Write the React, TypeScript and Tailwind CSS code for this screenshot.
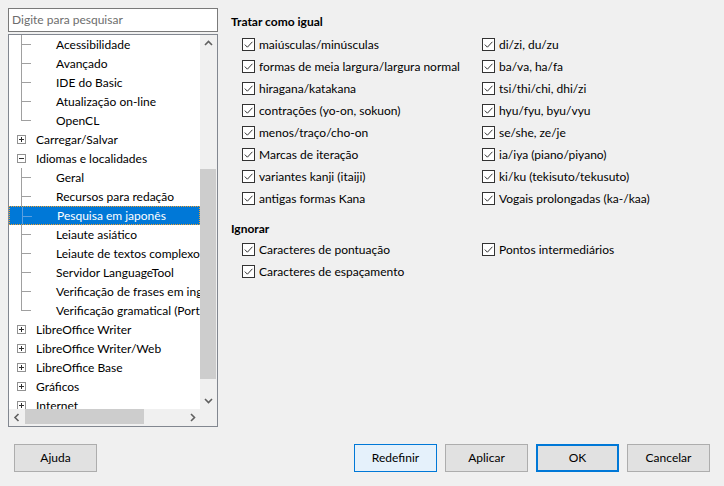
import React from "react";

type Row = {
  label: string;
  level: 1 | 2;
  expander?: "plus" | "minus";
  last?: boolean;
  selected?: boolean;
};

const treeRows: Row[] = [
  { label: "Acessibilidade", level: 2 },
  { label: "Avançado", level: 2 },
  { label: "IDE do Basic", level: 2 },
  { label: "Atualização on-line", level: 2 },
  { label: "OpenCL", level: 2, last: true },
  { label: "Carregar/Salvar", level: 1, expander: "plus" },
  { label: "Idiomas e localidades", level: 1, expander: "minus" },
  { label: "Geral", level: 2 },
  { label: "Recursos para redação", level: 2 },
  { label: "Pesquisa em japonês", level: 2, selected: true },
  { label: "Leiaute asiático", level: 2 },
  { label: "Leiaute de textos complexos", level: 2 },
  { label: "Servidor LanguageTool", level: 2 },
  { label: "Verificação de frases em inglês", level: 2 },
  { label: "Verificação gramatical (Português)", level: 2, last: true },
  { label: "LibreOffice Writer", level: 1, expander: "plus" },
  { label: "LibreOffice Writer/Web", level: 1, expander: "plus" },
  { label: "LibreOffice Base", level: 1, expander: "plus" },
  { label: "Gráficos", level: 1, expander: "plus" },
  { label: "Internet", level: 1, expander: "plus" },
];

const leftOptions = [
  "maiúsculas/minúsculas",
  "formas de meia largura/largura normal",
  "hiragana/katakana",
  "contrações (yo-on, sokuon)",
  "menos/traço/cho-on",
  "Marcas de iteração",
  "variantes kanji (itaiji)",
  "antigas formas Kana",
];

const rightOptions = [
  "di/zi, du/zu",
  "ba/va, ha/fa",
  "tsi/thi/chi, dhi/zi",
  "hyu/fyu, byu/vyu",
  "se/she, ze/je",
  "ia/iya (piano/piyano)",
  "ki/ku (tekisuto/tekusuto)",
  "Vogais prolongadas (ka-/kaa)",
];

function Expander({ kind }: { kind: "plus" | "minus" }) {
  return (
    <svg width="9" height="9" viewBox="0 0 9 9" className="absolute left-[8px] top-[5px]">
      <rect x="0.5" y="0.5" width="8" height="8" fill="white" stroke="#919191" />
      <path d="M2 4.5h5" stroke="#303030" />
      {kind === "plus" ? <path d="M4.5 2v5" stroke="#303030" /> : null}
    </svg>
  );
}

function TreeRow({ row }: { row: Row }) {
  const lineColor = row.selected ? "bg-[#5a9fe0]" : "bg-[#a0a0a0]";
  return (
    <div
      className={`relative h-[19px] flex items-center whitespace-nowrap ${
        row.selected ? "bg-[#0078d7] text-white border border-dotted border-[#f0a030]" : ""
      }`}
    >
      {row.level === 2 ? (
        <>
          <span className={`absolute left-[12px] top-0 w-px ${row.last ? "h-[10px]" : "h-full"} ${lineColor}`} />
          <span className={`absolute left-[12px] top-[9px] h-px w-[10px] ${lineColor}`} />
        </>
      ) : null}
      {row.expander ? <Expander kind={row.expander} /> : null}
      <span className={`pt-px ${row.level === 2 ? "pl-[47px]" : "pl-[27px]"}`}>{row.label}</span>
    </div>
  );
}

function Chevron({ dir }: { dir: "up" | "down" | "left" | "right" }) {
  const d = {
    up: "M1 5l3.5-3.5L8 5",
    down: "M1 2l3.5 3.5L8 2",
    left: "M5.5 1L2 4.5 5.5 8",
    right: "M3 1l3.5 3.5L3 8",
  }[dir];
  const vertical = dir === "up" || dir === "down";
  return (
    <svg width={vertical ? 9 : 8} height={vertical ? 7 : 9} viewBox={vertical ? "0 0 9 7" : "0 0 8 9"}>
      <path d={d} fill="none" stroke="#606060" strokeWidth="1.6" />
    </svg>
  );
}

function CheckBox() {
  return (
    <svg width="13" height="13" viewBox="0 0 13 13" className="shrink-0">
      <rect x="0.5" y="0.5" width="12" height="12" fill="white" stroke="#333333" />
      <path d="M2.8 6.6l2.6 2.6 5-5.4" fill="none" stroke="#333333" strokeWidth="1" />
    </svg>
  );
}

function Option({ label }: { label: string }) {
  return (
    <div className="h-[22px] flex items-center gap-[4px] whitespace-nowrap">
      <CheckBox />
      <span className="pt-px">{label}</span>
    </div>
  );
}

function Button({ label, variant = "normal" }: { label: string; variant?: "normal" | "hover" | "default" }) {
  const styles = {
    normal: "border border-[#adadad] bg-[#e1e1e1]",
    hover: "border border-[#0078d7] bg-[#e5f1fb]",
    default: "border-2 border-[#0078d7] bg-[#e1e1e1]",
  }[variant];
  return (
    <div className={`w-[83px] h-[28px] flex items-center justify-center ${styles}`}>{label}</div>
  );
}

export default function App() {
  return (
    <div className="w-[724px] h-[486px] overflow-hidden bg-[#f0f0f0] text-[12px] text-black font-['Segoe_UI','Lato',sans-serif]">
      <div className="flex h-[427px]">
        <div className="ml-[8px] pt-[8px] w-[210px] flex flex-col">
          <div className="h-[24px] border border-[#7a7a7a] bg-white flex items-center px-[3px] text-[#6d6d6d]">
            Digite para pesquisar
          </div>
          <div className="mt-[2px] h-[393px] border border-[#828790] bg-white grid grid-cols-[191px_17px] grid-rows-[374px_17px]">
            <div className="overflow-hidden">
              {treeRows.map((row) => (
                <TreeRow key={row.label} row={row} />
              ))}
            </div>
            <div className="bg-[#f0f0f0] flex flex-col">
              <div className="h-[17px] flex items-center justify-center">
                <Chevron dir="up" />
              </div>
              <div className="flex-1 pt-[117px]">
                <div className="h-[210px] w-[16px] bg-[#cdcdcd]" />
              </div>
              <div className="h-[17px] flex items-center justify-center">
                <Chevron dir="down" />
              </div>
            </div>
            <div className="bg-[#f0f0f0] flex items-center">
              <div className="w-[16px] flex justify-center">
                <Chevron dir="left" />
              </div>
              <div className="flex-1 h-full">
                <div className="h-[15px] w-[119px] bg-[#cdcdcd]" />
              </div>
              <div className="w-[17px] flex justify-center">
                <Chevron dir="right" />
              </div>
            </div>
            <div className="bg-[#f0f0f0]" />
          </div>
        </div>

        <div className="ml-[13px] pt-[13px] flex-1">
          <div className="h-[18px] flex items-center font-bold">Tratar como igual</div>
          <div className="mt-[2px] pl-[11px] grid grid-cols-[240px_auto]">
            <div>
              {leftOptions.map((o) => (
                <Option key={o} label={o} />
              ))}
            </div>
            <div>
              {rightOptions.map((o) => (
                <Option key={o} label={o} />
              ))}
            </div>
          </div>
          <div className="mt-[11px] h-[18px] flex items-center font-bold">Ignorar</div>
          <div className="pl-[11px] grid grid-cols-[240px_auto]">
            <div>
              <Option label="Caracteres de pontuação" />
              <Option label="Caracteres de espaçamento" />
            </div>
            <div>
              <Option label="Pontos intermediários" />
            </div>
          </div>
        </div>
      </div>

      <div className="mt-[17px] px-[14px] flex items-center">
        <Button label="Ajuda" />
        <div className="flex-1" />
        <div className="flex gap-[8px]">
          <Button label="Redefinir" variant="hover" />
          <Button label="Aplicar" />
          <Button label="OK" variant="default" />
          <Button label="Cancelar" />
        </div>
      </div>
    </div>
  );
}
